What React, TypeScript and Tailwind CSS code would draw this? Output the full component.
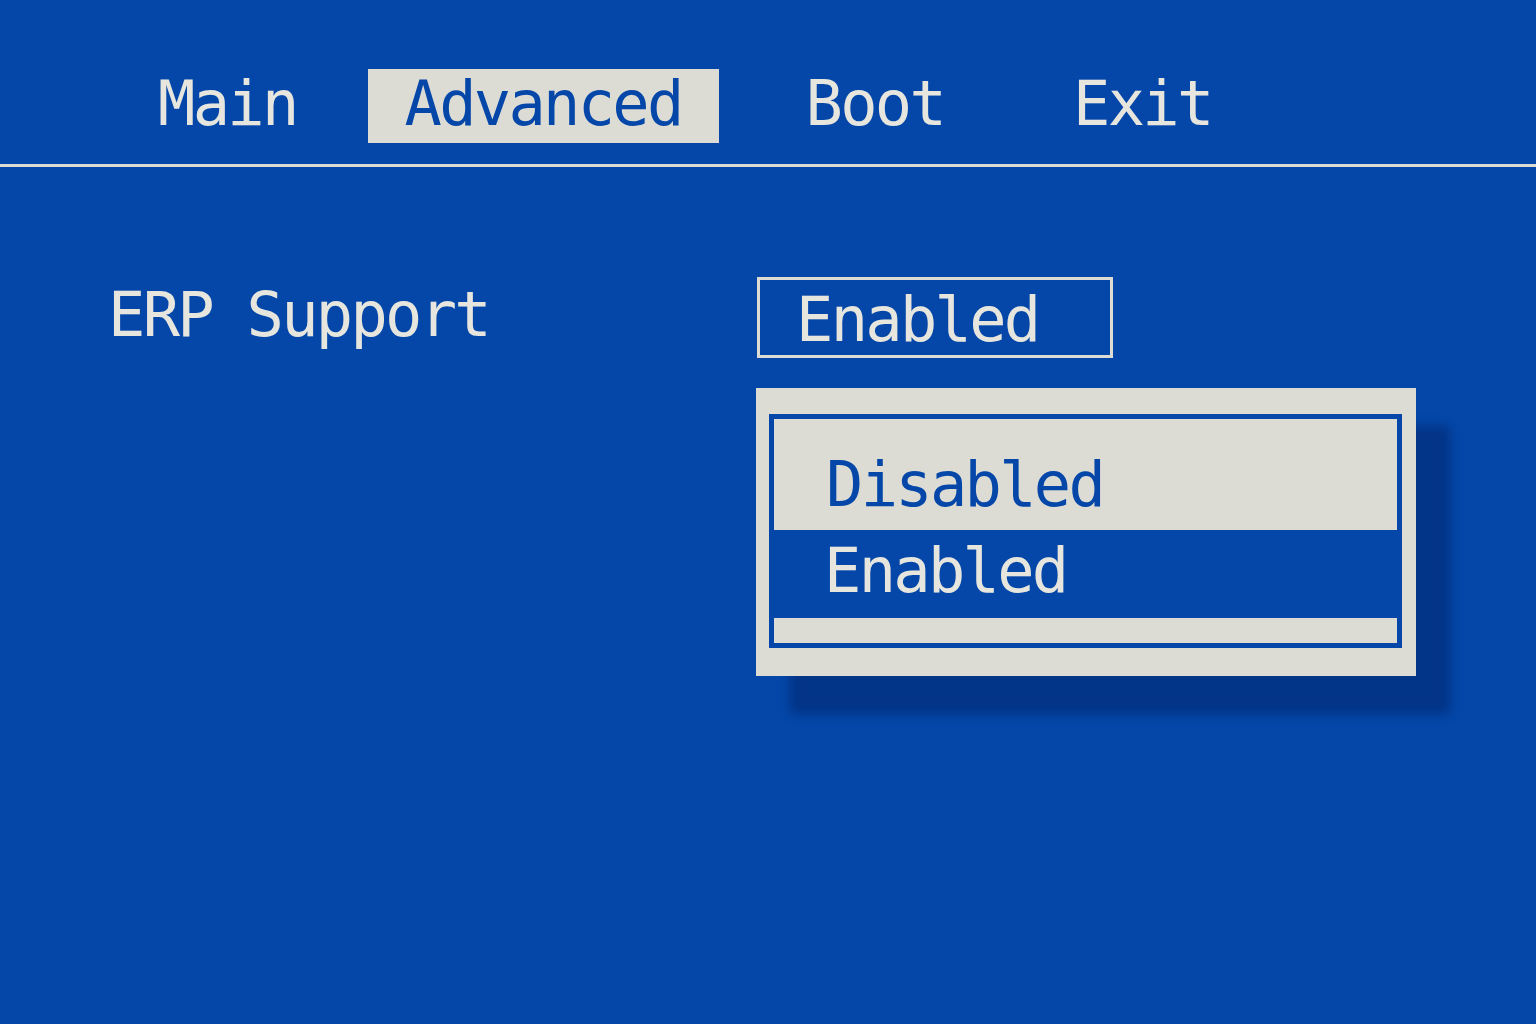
const tabs = [
  { label: "Main", active: false, ml: "ml-[121px]" },
  { label: "Advanced", active: true, ml: "ml-[34px]" },
  { label: "Boot", active: false, ml: "ml-[50px]" },
  { label: "Exit", active: false, ml: "ml-[55px]" },
];

export default function App() {
  return (
    <div
      className="w-full h-[1024px] overflow-hidden bg-[#0447a8] text-[#e6e6df] text-[62px] leading-none tracking-[-2.7px]"
      style={{ fontFamily: '"DejaVu Sans Mono", "Liberation Mono", monospace' }}
    >
      {/* top menu */}
      <div className="flex pt-[69px]">
        {tabs.map((tab) => (
          <div
            key={tab.label}
            className={
              tab.ml +
              " px-[37px] pt-[4px] pb-[8px] " +
              (tab.active ? "bg-[#dcdcd5] text-[#0447a8]" : "")
            }
          >
            {tab.label}
          </div>
        ))}
      </div>

      <div className="mt-[21px] h-[3px] bg-[#dcdcd5]" />

      {/* option row */}
      <div className="flex mt-[110px]">
        <div className="ml-[108px] mt-[7px] w-[649px]">ERP Support</div>

        <div className="flex flex-col">
          <div className="w-[356px] h-[81px] border-[3px] border-[#dcdcd5] pl-[36px] pt-[9px]">
            Enabled
          </div>

          {/* dropdown */}
          <div className="mt-[30px] -ml-[1px] w-[660px] bg-[#dcdcd5] pl-[13px] pr-[14px] pt-[26px] pb-[28px] shadow-[34px_38px_10px_rgba(0,25,85,0.4)]">
            <div className="border-[5px] border-[#0447a8]">
              <div className="h-[111px] bg-[#dcdcd5] text-[#0447a8] pl-[52px] pt-[35px]">
                Disabled
              </div>
              <div className="h-[88px] bg-[#0447a8] text-[#e6e6df] pl-[50px] pt-[10px]">
                Enabled
              </div>
              <div className="h-[25px] bg-[#dcdcd5]" />
            </div>
          </div>
        </div>
      </div>
    </div>
  );
}
